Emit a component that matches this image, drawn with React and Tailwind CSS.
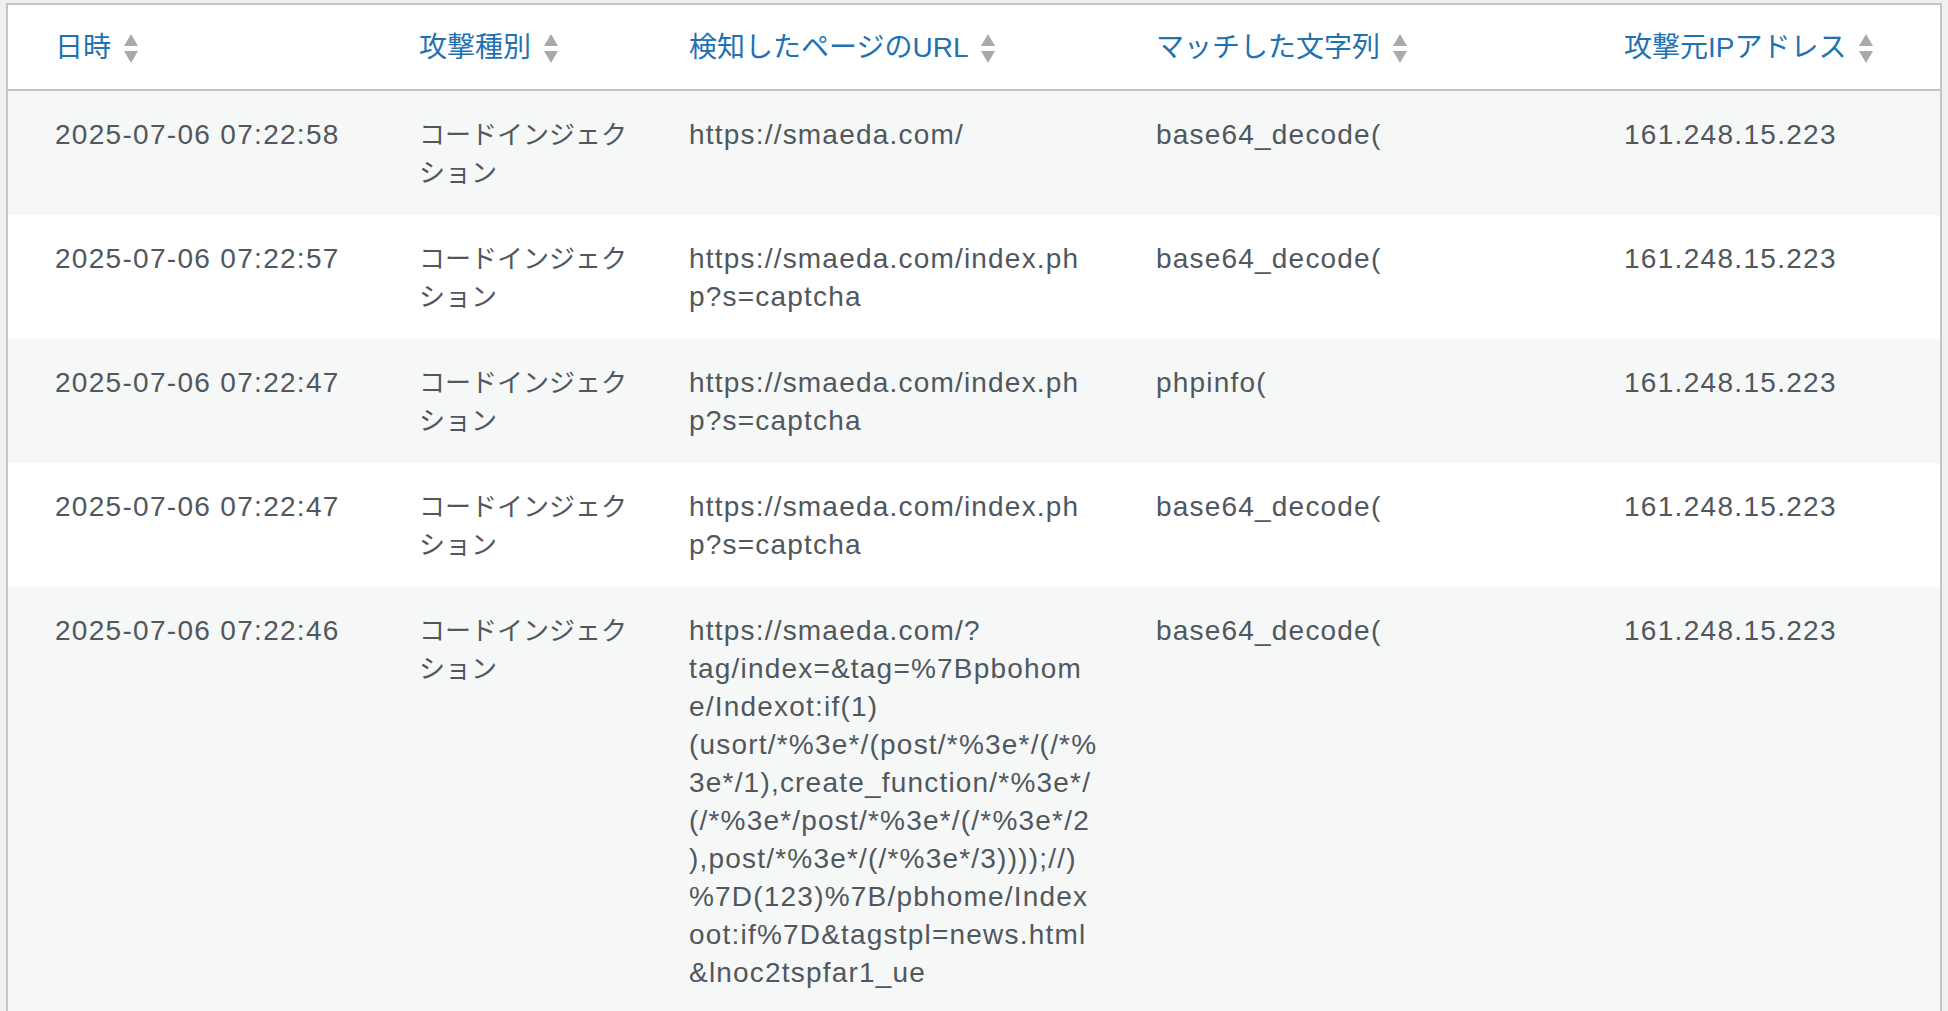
import React from 'react';

const rows = [
    {
        time: '2025-07-06 07:22:58',
        type: 'コードインジェクション',
        url: ['https://smaeda.com/'],
        match: 'base64_decode(',
        ip: '161.248.15.223'
    },
    {
        time: '2025-07-06 07:22:57',
        type: 'コードインジェクション',
        url: ['https://smaeda.com/index.ph', 'p?s=captcha'],
        match: 'base64_decode(',
        ip: '161.248.15.223'
    },
    {
        time: '2025-07-06 07:22:47',
        type: 'コードインジェクション',
        url: ['https://smaeda.com/index.ph', 'p?s=captcha'],
        match: 'phpinfo(',
        ip: '161.248.15.223'
    },
    {
        time: '2025-07-06 07:22:47',
        type: 'コードインジェクション',
        url: ['https://smaeda.com/index.ph', 'p?s=captcha'],
        match: 'base64_decode(',
        ip: '161.248.15.223'
    },
    {
        time: '2025-07-06 07:22:46',
        type: 'コードインジェクション',
        url: [
            'https://smaeda.com/?',
            'tag/index=&tag=%7Bpbohom',
            'e/Indexot:if(1)',
            '(usort/*%3e*/(post/*%3e*/(/*%',
            '3e*/1),create_function/*%3e*/',
            '(/*%3e*/post/*%3e*/(/*%3e*/2',
            '),post/*%3e*/(/*%3e*/3))));//)',
            '%7D(123)%7B/pbhome/Index',
            'oot:if%7D&tagstpl=news.html',
            '&lnoc2tspfar1_ue'
        ],
        match: 'base64_decode(',
        ip: '161.248.15.223'
    }
];

const columns = ['日時', '攻撃種別', '検知したページのURL', 'マッチした文字列', '攻撃元IPアドレス'];

const SortIcon = () => (
    <svg width="14" height="29" viewBox="0 0 14 29" className="shrink-0">
        <polygon points="7,0 14,12 0,12" fill="#a7aaad" />
        <polygon points="0,17 14,17 7,29" fill="#a7aaad" />
    </svg>
);

const App = () => {
    return (
        <div className="min-h-screen bg-[#f0f0f1] pt-[3px] px-[6px] font-['Liberation_Sans','Noto_Sans_CJK_JP',sans-serif]">
            <table className="w-full table-fixed border-separate border-spacing-0 border-2 border-[#c3c4c7] bg-white">
                <colgroup>
                    <col className="w-[387px]" />
                    <col className="w-[270px]" />
                    <col className="w-[467px]" />
                    <col className="w-[468px]" />
                    <col />
                </colgroup>
                <thead>
                    <tr>
                        {columns.map((col, i) => (
                            <th
                                key={col}
                                className={`${i === 0 ? 'pl-[47px]' : 'pl-[24px]'} pr-[24px] pt-[24px] pb-[22px] text-left font-normal text-[28px] leading-[38px] text-[#2271b1] border-b-2 border-[#c3c4c7] bg-white`}
                            >
                                <span className="inline-flex items-center gap-[13px] whitespace-nowrap">
                                    {col}
                                    <SortIcon />
                                </span>
                            </th>
                        ))}
                    </tr>
                </thead>
                <tbody>
                    {rows.map((row, i) => (
                        <tr key={i} className={i % 2 === 0 ? 'bg-[#f6f7f7]' : 'bg-white'}>
                            <td className="pl-[47px] pr-[24px] pt-[25px] pb-[23px] align-top text-[28px] leading-[38px] tracking-[1.3px] text-[#50575e] whitespace-nowrap">
                                {row.time}
                            </td>
                            <td className="px-[24px] pt-[25px] pb-[23px] align-top text-[26px] leading-[38px] text-[#50575e]">
                                {row.type}
                            </td>
                            <td className="px-[24px] pt-[25px] pb-[23px] align-top text-[28px] leading-[38px] tracking-[1.2px] text-[#50575e]">
                                {row.url.map((line, j) => (
                                    <div key={j} className="whitespace-nowrap">{line}</div>
                                ))}
                            </td>
                            <td className="px-[24px] pt-[25px] pb-[23px] align-top text-[28px] leading-[38px] tracking-[1.2px] text-[#50575e]">
                                {row.match}
                            </td>
                            <td className="px-[24px] pt-[25px] pb-[23px] align-top text-[28px] leading-[38px] tracking-[1.3px] text-[#50575e]">
                                {row.ip}
                            </td>
                        </tr>
                    ))}
                </tbody>
            </table>
        </div>
    );
};

export default App;
